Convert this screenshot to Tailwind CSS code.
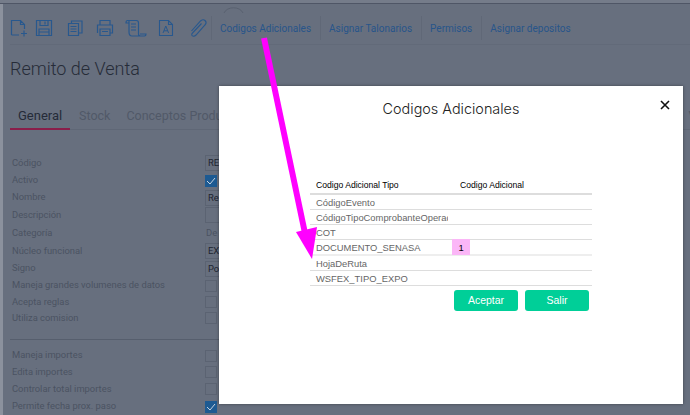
<!DOCTYPE html>
<html lang="es">
<head>
    <meta charset="UTF-8">
    <title>Remito de Venta</title>
    <script src="https://cdn.jsdelivr.net/npm/@tailwindcss/browser@4"></script>
</head>
<body class="relative w-[690px] h-[415px] overflow-hidden bg-[#676f7e] font-['Roboto',sans-serif]">
    <div class="h-[4px] bg-[#757c8a] border-b border-[#4f5666]"></div>
    <div class="border-l-[3px] border-[#8b919d] h-[411px] pl-[7px] overflow-hidden">
        <!-- toolbar -->
        <div class="h-[41px] border-b border-[#626a79] flex items-center text-[#28558a] pt-[7px]">
            <div class="flex w-[201px] h-[34px] items-center">
                <svg width="201" height="20" viewBox="0 0 201 20" fill="none" stroke="#28588e" stroke-width="1.2">
                    <path d="M1.5 17V2.500h9l4 4V11M10.500 2.500v4h4M1.500 17H9M11 15.500h6M14 12.500v6"/>
                    <path d="M26.500 2.500h15v15h-15zM30 2.500v5h8v-5M35 3.500v3M29 17.500v-6.500h10v6.500M29 14h10"/>
                    <path d="M58.500 5.500h10v12h-10zM61.500 5.500V3h10.500v12h-3.500M60.500 8.500h6M60.500 11h6M60.500 13.500h6"/>
                    <path d="M90 7V2.500h10V7M87.500 15V7h15v8H100M90 11h10v6.500H90zM92 13.500h6"/>
                    <path d="M117.500 2.500h9c1 0 2 1 2 2.500v11c0 1.500 1 2 2 2h4c1 0 1.500-1 1.500-2H130M117.500 2.500c-1 0-1.500 1-1.500 2.500h3M119 2.500V14c0 2 1 4 3 4h8M121 6h5M121 9h5M121 12h5"/>
                    <path d="M149.500 2.500h9l4 4v11h-13zM158.500 2.500v4h4" stroke-width="1.100"/>
                    <path d="M153 15l2.800-7 2.800 7M154 12.800h3.600" stroke-width="1"/>
                    <path d="M191.500 5.500l-9 9.500c-1.500 1.500-.5 3 .5 3 1 .5 2 0 3-1l9-10c2-2 1-3.500 0-4.500s-3-1-4.500.5l-9 10" stroke-width="1.100"/>
                </svg>
            </div>
            <div class="flex text-[10px] h-[24px] items-center">
                <span class="border-l border-[#606877] h-[24px] leading-[26px] pl-[8px] pr-[9px]">Codigos Adicionales</span>
                <span class="border-l border-[#606877] h-[24px] leading-[26px] pl-[8px] pr-[9px]">Asignar Talonarios</span>
                <span class="border-l border-[#606877] h-[24px] leading-[26px] pl-[8px] pr-[9px]">Permisos</span>
                <span class="border-l border-[#606877] h-[24px] leading-[26px] pl-[8px]">Asignar depositos</span>
            </div>
        </div>
        <h1 class="text-[18px] font-light text-[#262c38] leading-[22px] mt-[13px]">Remito de Venta</h1>
        <!-- tabs -->
        <div class="flex mt-[24px] h-[26px] border-b border-[#5f6776] text-[13px] leading-[23px] w-[680px] whitespace-nowrap">
            <span class="w-[60px] shrink-0 h-[26px] pl-[8px] border-b-[2px] border-[#8a1d4a] text-[#252b38]">General</span>
            <span class="ml-[9px] shrink-0 text-[12.500px] text-[#515968]">Stock</span>
            <span class="ml-[16px] shrink-0 text-[12.500px] text-[#515968]">Conceptos Productos</span>
            <span class="ml-[442px] shrink-0 text-[#515968]">Ventas</span>
        </div>
        <!-- formulario -->
        <div class="mt-[24px] text-[9.4px] text-[#4b5362] w-[570px]">
            <div class="flex items-center h-[18px]"><span class="w-[195px] pl-[2px]">Código</span><span class="w-[20px] h-[16px] border border-[#5b6372] text-[#1e2430] pl-[2px] leading-[14px] overflow-hidden">RE</span></div>
            <div class="flex items-center h-[17px]"><span class="w-[195px] pl-[2px]">Activo</span><span class="w-[12px] h-[12px] bg-[#1d5a92] flex items-center justify-center"><svg width="10" height="8" viewBox="0 0 10 8" fill="none" stroke="#c5d2e0" stroke-width="1"><path d="M1 4l3 3 5-6"/></svg></span></div>
            <div class="flex items-center h-[17px]"><span class="w-[195px] pl-[2px]">Nombre</span><span class="w-[20px] h-[16px] border border-[#5b6372] text-[#1e2430] pl-[2px] leading-[14px] overflow-hidden">Re</span></div>
            <div class="flex items-center h-[18px]"><span class="w-[195px] pl-[2px]">Descripción</span><span class="w-[20px] h-[16px] border border-[#5b6372]"></span></div>
            <div class="flex items-center h-[18px]"><span class="w-[195px] pl-[2px]">Categoría</span><span class="w-[20px] pl-[1px] overflow-hidden">De</span></div>
            <div class="flex items-center h-[18px]"><span class="w-[195px] pl-[2px]">Núcleo funcional</span><span class="w-[20px] h-[16px] border border-[#5b6372] text-[#1e2430] pl-[2px] leading-[14px] overflow-hidden">EX</span></div>
            <div class="flex items-center h-[17px]"><span class="w-[195px] pl-[2px]">Signo</span><span class="w-[20px] h-[16px] border border-[#5b6372] text-[#1e2430] pl-[2px] leading-[14px] overflow-hidden">Po</span></div>
            <div class="flex items-center h-[17px]"><span class="w-[195px] pl-[2px]">Maneja grandes volumenes de datos</span><span class="w-[12px] h-[12px] border border-[#5b6372]"></span></div>
            <div class="flex items-center h-[16px]"><span class="w-[195px] pl-[2px]">Acepta reglas</span><span class="w-[12px] h-[12px] border border-[#5b6372]"></span></div>
            <div class="flex items-center h-[16px]"><span class="w-[195px] pl-[2px]">Utiliza comision</span><span class="w-[12px] h-[12px] border border-[#5b6372]"></span></div>
            <div class="h-px bg-[#565e6d] mt-[13px] mb-[7px]"></div>
            <div class="flex items-center h-[17px]"><span class="w-[195px] pl-[2px]">Maneja importes</span><span class="w-[12px] h-[12px] border border-[#5b6372]"></span></div>
            <div class="flex items-center h-[16px]"><span class="w-[195px] pl-[2px]">Edita importes</span><span class="w-[12px] h-[12px] border border-[#5b6372]"></span></div>
            <div class="flex items-center h-[18px]"><span class="w-[195px] pl-[2px]">Controlar total importes</span><span class="w-[12px] h-[12px] border border-[#5b6372]"></span></div>
            <div class="flex items-center h-[17px]"><span class="w-[195px] pl-[2px]">Permite fecha prox. paso</span><span class="w-[12px] h-[12px] bg-[#1d5a92] flex items-center justify-center"><svg width="10" height="8" viewBox="0 0 10 8" fill="none" stroke="#c5d2e0" stroke-width="1"><path d="M1 4l3 3 5-6"/></svg></span></div>
        </div>
    </div>

    <!-- modal -->
    <div class="absolute left-[219px] top-[86px] w-[464px] h-[318px] bg-white shadow-[0_0_3px_rgba(0,0,0,0.4)]">
        <button class="absolute right-[13px] top-[14px] text-black">
            <svg width="10" height="10" viewBox="0 0 10 10" stroke="#111" stroke-width="1.6"><path d="M1 1l8 8M9 1l-8 8"/></svg>
        </button>
        <h2 class="text-center text-[14.400px] font-light text-[#222] font-['Inter',sans-serif] leading-[20px] pt-[13px]">Codigos Adicionales</h2>
        <div class="ml-[91px] mr-[91px] mt-[59px] font-['Liberation_Sans',sans-serif] text-[9.4px] text-[#666]">
            <div class="flex h-[17px] border-b-2 border-[#ddd] text-black text-[8.6px] leading-[15px]">
                <span class="pl-[6px] w-[150px]">Codigo Adicional Tipo</span><span>Codigo Adicional</span>
            </div>
            <div class="h-[15px] border-b border-[#ddd] pl-[6px] leading-[16px]">CódigoEvento</div>
            <div class="h-[15px] border-b border-[#ddd] pl-[6px] leading-[16px]"><span class="block w-[132px] overflow-hidden whitespace-nowrap">CódigoTipoComprobanteOperacion</span></div>
            <div class="h-[15px] border-b border-[#ddd] pl-[6px] leading-[16px]">COT</div>
            <div class="h-[16px] border-b-2 border-[#eee] pl-[6px] leading-[16px] flex"><span class="w-[136px]">DOCUMENTO_SENASA</span><span class="w-[18px] h-[16px] -mt-[1px] bg-[#fbb6f7] text-black text-center leading-[18px] z-10">1</span></div>
            <div class="h-[15px] border-b border-[#ddd] pl-[6px] leading-[16px]">HojaDeRuta</div>
            <div class="h-[15px] border-b border-[#ddd] pl-[6px] leading-[16px]">WSFEX_TIPO_EXPO</div>
            <div class="flex justify-end gap-[7px] pr-[3px] mt-[4px]">
                <button class="w-[64px] h-[21px] rounded-[3px] bg-[#00cf98] text-white text-[10.5px]">Aceptar</button>
                <button class="w-[64px] h-[21px] rounded-[3px] bg-[#00cf98] text-white text-[10.5px]">Salir</button>
            </div>
        </div>
    </div>

    <!-- flecha -->
    <svg class="absolute left-0 top-0 pointer-events-none" width="690" height="415" viewBox="0 0 690 415">
        <path d="M224 13C227 6 240 6 243 13" stroke="#596170" fill="none"/>
        <path d="M264 38L306 238" stroke="#ff00ff" stroke-width="6" fill="none"/>
        <path d="M296 232L317 227L312 259Z" fill="#ff00ff"/>
    </svg>
</body>
</html>
